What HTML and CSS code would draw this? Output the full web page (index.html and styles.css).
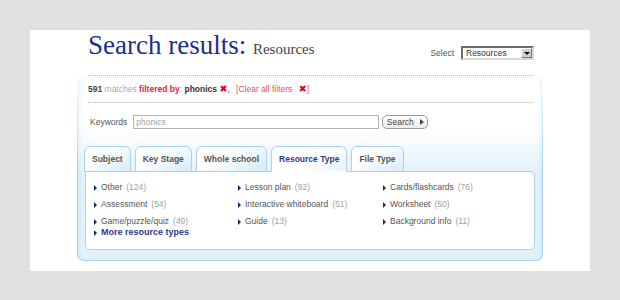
FILE: index.html
```html
<!DOCTYPE html>
<html lang="en">
<head>
  <meta charset="UTF-8" />
  <title>Search results: Resources</title>
  <link rel="stylesheet" href="styles.css">
</head>
<body>
  <div class="page">
    <div class="wrap">
      <div class="header">
        <h1 class="title">Search results: <span>Resources</span></h1>
        <div class="select-row">
          <span class="select-label">Select</span>
          <div class="fake-select">
            <span class="fake-select-text">Resources</span>
            <span class="fake-select-btn"></span>
          </div>
        </div>
      </div>

      <div class="panel-frame">
        <div class="panel">
          <div class="filters">
            <b class="count">591</b> <span class="muted">matches</span>
            <span class="red-strong">filtered by</span><span class="muted">:</span>
            <b class="term">phonics</b> <span class="x">✖</span>,
            <span class="clear">[Clear all filters <span class="x">✖</span>]</span>
          </div>

          <div class="search-row">
            <label class="kw-label">Keywords</label>
            <div class="kw-input">phonics</div>
            <div class="search-btn">Search <span class="btn-arrow"></span></div>
          </div>

          <div class="tabs">
            <div class="tab">Subject</div>
            <div class="tab">Key Stage</div>
            <div class="tab">Whole school</div>
            <div class="tab active">Resource Type</div>
            <div class="tab">File Type</div>
          </div>
          <div class="tab-body">
            <ul class="facets">
              <li>Other <span class="n">(124)</span></li>
              <li>Lesson plan <span class="n">(92)</span></li>
              <li>Cards/flashcards <span class="n">(76)</span></li>
              <li>Assessment <span class="n">(54)</span></li>
              <li>Interactive whiteboard <span class="n">(51)</span></li>
              <li>Worksheet <span class="n">(50)</span></li>
              <li>Game/puzzle/quiz <span class="n">(49)</span></li>
              <li>Guide <span class="n">(13)</span></li>
              <li>Background info <span class="n">(11)</span></li>
            </ul>
            <a class="more" href="#">More resource types</a>
          </div>
        </div>
      </div>
    </div>
  </div>
</body>
</html>
```

FILE: styles.css
```css
body {
  margin: 0;
  background: #e0e0e0;
  font-family: "Liberation Sans", Arial, sans-serif;
  font-size: 8.5px;
  color: #555;
}
.page {
  margin: 30px 30px 0 30px;
  height: 241px;
  background: #fff;
  overflow: hidden;
}
.wrap {
  width: 466px;
  margin: 0 auto;
}
.header {
  display: flex;
  justify-content: space-between;
  align-items: flex-start;
  margin: 0 11px;
  padding: 2px 0 12px 0;
  border-bottom: 1px dotted #bbb;
}
.title {
  margin: 0;
  font-family: "Liberation Serif", "Times New Roman", serif;
  font-weight: normal;
  font-size: 27px;
  line-height: 27px;
  color: #1c2e8e;
  white-space: nowrap;
}
.title span {
  font-size: 15px;
  color: #444;
}
.select-row {
  display: flex;
  align-items: center;
  gap: 7px;
  margin-top: 14px;
  margin-right: -2px;
}
.select-label {
  color: #555;
  font-size: 8.5px;
}
.fake-select {
  width: 69px;
  height: 10px;
  border: 2px solid;
  border-color: #6d6d6d #d8d8d8 #d8d8d8 #6d6d6d;
  display: flex;
  align-items: center;
  background: #fff;
}
.fake-select-text {
  flex: 1;
  padding-left: 3px;
  color: #333;
}
.fake-select-btn {
  width: 11px;
  height: 10px;
  background: #d4d0c8;
  box-sizing: border-box;
  border: 1px solid;
  border-color: #fff #777 #777 #fff;
  display: flex;
  align-items: center;
  justify-content: center;
}
.fake-select-btn::before {
  content: "";
  border-left: 3px solid transparent;
  border-right: 3px solid transparent;
  border-top: 3px solid #000;
}
.panel-frame {
  padding: 1px;
  border-radius: 7px;
  background: linear-gradient(to bottom, rgba(168, 213, 238, 0) 0, rgba(168, 213, 238, 0.5) 40px, #a9d5ee 90px);
}
.panel {
  border-radius: 6px;
  height: 183px;
  background: linear-gradient(to bottom, #fff 0, #fff 28%, #e3f1fb 52%, #e3f1fb 100%);
  box-shadow: inset 3px 0 4px -2px rgba(168, 213, 238, 0.35), inset -3px 0 4px -2px rgba(168, 213, 238, 0.35);
}
.filters {
  margin: 0 10px;
  padding: 7px 0 7px 0;
  line-height: 11px;
  border-bottom: 1px dotted #bbb;
  white-space: nowrap;
}
.count {
  color: #444;
}
.muted {
  color: #aaa;
}
.red-strong {
  color: #e6263f;
  font-weight: bold;
}
.term {
  color: #333;
}
.x {
  color: #e3001b;
  font-family: "DejaVu Sans", sans-serif;
  font-size: 9.5px;
  line-height: 8px;
}
.clear {
  color: #ea4a6c;
  margin-left: 4px;
}
.clear .x {
  margin-left: 4px;
}
.search-row {
  display: flex;
  align-items: center;
  margin: 12px 0 0 12px;
  height: 14px;
}
.kw-label {
  font-size: 8.5px;
  color: #555;
  margin-right: 6px;
}
.kw-input {
  width: 240px;
  height: 12px;
  border: 1px solid #b4b4b4;
  padding: 0 2px;
  line-height: 12px;
  color: #a0a0a0;
}
.search-btn {
  margin-left: 3px;
  width: 44px;
  height: 12px;
  border: 1px solid #9a9a9a;
  border-radius: 5px;
  background: linear-gradient(to bottom, #fff, #ececec);
  color: #444;
  display: flex;
  align-items: center;
  justify-content: center;
  gap: 6px;
}
.btn-arrow {
  border-top: 3px solid transparent;
  border-bottom: 3px solid transparent;
  border-left: 4px solid #444;
}
.tabs {
  display: flex;
  gap: 4px;
  margin: 17px 7px -1px 6px;
  position: relative;
}
.tab {
  height: 24px;
  line-height: 24px;
  padding: 0 7px;
  border: 1px solid #a9d3ec;
  border-radius: 6px 6px 0 0;
  background: linear-gradient(150deg, #fff 35%, #d4eaf8 100%);
  font-weight: bold;
  color: #555;
}
.tab.active {
  background: linear-gradient(150deg, #fff 55%, #e6f3fb 100%);
  border-bottom-color: #fff;
  color: #2b3a8f;
}
.tab-body {
  margin: 0 7px;
  height: 67px;
  padding: 10px 0 0 8px;
  background: #fff;
  border: 1px solid #a9d3ec;
  border-radius: 0 5px 5px 5px;
}
.facets {
  list-style: none;
  margin: 0;
  padding: 0;
  display: grid;
  grid-template-columns: 144px 145px 140px;
  row-gap: 6px;
}
.facets li,
.more {
  display: flex;
  align-items: center;
  line-height: 11px;
  white-space: nowrap;
}
.facets li::before,
.more::before {
  content: "";
  border-top: 3px solid transparent;
  border-bottom: 3px solid transparent;
  border-left: 3px solid #1b2a6b;
  margin-right: 4px;
}
.n {
  color: #a0a0a0;
  margin-left: 4px;
}
.more {
  font-size: 9px;
  font-weight: bold;
  color: #2b3990;
  text-decoration: none;
}
```
